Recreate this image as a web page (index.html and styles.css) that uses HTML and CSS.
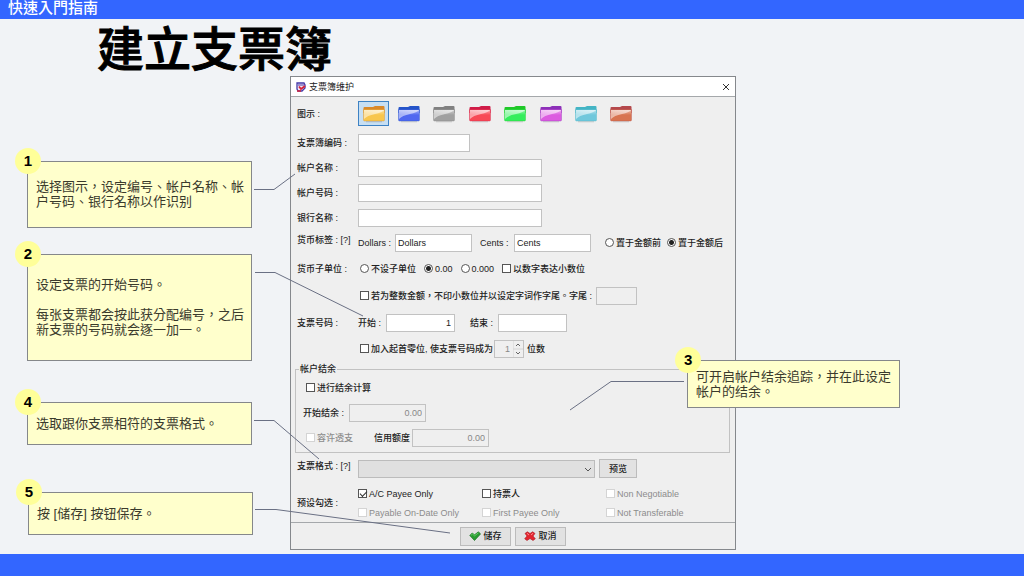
FILE: index.html
```html
<!DOCTYPE html>
<html lang="zh-Hant">
<head>
<meta charset="utf-8">
<title>建立支票簿</title>
<link rel="stylesheet" href="styles.css">
</head>
<body>
<svg class="defs" width="0" height="0" aria-hidden="true">
  <defs>
    <linearGradient id="shine" x1="0" y1="0" x2="1" y2="1">
      <stop offset="0" stop-color="#fff" stop-opacity=".35"/>
      <stop offset="1" stop-color="#fff" stop-opacity=".75"/>
    </linearGradient>
    <linearGradient id="glow" x1="0" y1="0" x2="0" y2="1">
      <stop offset="0" stop-color="#fff" stop-opacity=".5"/>
      <stop offset="1" stop-color="#fff" stop-opacity="0"/>
    </linearGradient>
    <symbol id="folder" viewBox="0 0 22 18">
      <path class="back" d="M.5 3Q.5 2 1.500 2H10L12 1H20.500Q21.500 1 21.500 2V8H.5Z"/>
      <path class="front" d="M.5 4.500H21.500V15Q21.500 16 20.500 16H1.500Q.5 16 .5 15Z"/>
      <path d="M1 5H21V10H1Z" fill="url(#glow)"/>
      <path d="M1 5H21Q19 7.500 12 9Q4 10.500 1 14Z" fill="url(#shine)"/>
      <path d="M3 16.800H19" stroke="#000" stroke-opacity=".15"/>
    </symbol>
  </defs>
</svg>

<header class="topbar">快速入門指南</header>

<main class="slide">
  <h1 class="title">建立支票簿</h1>

  <div class="notes">
    <section class="note note-1"><span class="badge">1</span><p>选择图示，设定编号、帐户名称、帐户号码、银行名称以作识别</p></section>
    <section class="note note-2"><span class="badge">2</span><p>设定支票的开始号码。</p><p>每张支票都会按此获分配编号，之后新支票的号码就会逐一加一。</p></section>
    <section class="note note-4"><span class="badge">4</span><p>选取跟你支票相符的支票格式。</p></section>
    <section class="note note-5"><span class="badge">5</span><p>按 [储存] 按钮保存。</p></section>
  </div>

  <form class="dialog" lang="zh-Hans">
    <div class="dialog-title">
      <svg width="10" height="10" viewBox="0 0 10 10" aria-hidden="true">
        <path d="M1 1H8L9 3V6L6 9H2L1 7Z" fill="#f4e8f4" stroke="#4338a8" stroke-width="1.300"/>
        <path d="M2 3H8" stroke="#4338a8"/>
        <path d="M3 4.500L5 7L9 4" fill="none" stroke="#d52238" stroke-width="1.800"/>
        <path d="M1 9H5" stroke="#d52238" stroke-width="1.500"/>
      </svg>
      <span>支票簿维护</span>
      <button type="button" class="close" aria-label="关闭">
        <svg width="8" height="8" viewBox="0 0 8 8"><path d="M1 1L7 7M7 1L1 7" stroke="#333" fill="none"/></svg>
      </button>
    </div>

    <div class="panel">
      <div class="row row-icons">
        <span class="name">图示 :</span>
        <div class="folders">
          <button type="button" class="folder gold selected" aria-label="金色"><svg width="22" height="18"><use href="#folder"/></svg></button>
          <button type="button" class="folder blue" aria-label="蓝色"><svg width="22" height="18"><use href="#folder"/></svg></button>
          <button type="button" class="folder gray" aria-label="灰色"><svg width="22" height="18"><use href="#folder"/></svg></button>
          <button type="button" class="folder red" aria-label="红色"><svg width="22" height="18"><use href="#folder"/></svg></button>
          <button type="button" class="folder green" aria-label="绿色"><svg width="22" height="18"><use href="#folder"/></svg></button>
          <button type="button" class="folder purple" aria-label="紫色"><svg width="22" height="18"><use href="#folder"/></svg></button>
          <button type="button" class="folder cyan" aria-label="青色"><svg width="22" height="18"><use href="#folder"/></svg></button>
          <button type="button" class="folder brown" aria-label="棕色"><svg width="22" height="18"><use href="#folder"/></svg></button>
        </div>
      </div>
      <div class="row"><label class="name" for="code">支票簿编码 :</label><input class="w-code" id="code" type="text"></div>
      <div class="row"><label class="name" for="accname">帐户名称 :</label><input class="w-long" id="accname" type="text"></div>
      <div class="row"><label class="name" for="accno">帐户号码 :</label><input class="w-long" id="accno" type="text"></div>
      <div class="row"><label class="name" for="bank">银行名称 :</label><input class="w-long" id="bank" type="text"></div>
      <div class="row">
        <span class="name raised">货币标签 : [?]</span>
        <label class="l-dollars" for="dollars">Dollars :</label><input class="w-unit" id="dollars" type="text" value="Dollars">
        <label class="l-cents" for="cents">Cents :</label><input class="w-unit" id="cents" type="text" value="Cents">
        <label class="choice place"><input type="radio" name="place">置于金额前</label>
        <label class="choice place-after"><input type="radio" name="place" checked>置于金额后</label>
      </div>
      <div class="row tall">
        <span class="name">货币子单位 :</span>
        <div class="choices">
          <label class="choice"><input type="radio" name="sub">不设子单位</label>
          <label class="choice"><input type="radio" name="sub" checked>0.00</label>
          <label class="choice"><input type="radio" name="sub">0.000</label>
          <label class="choice"><input type="checkbox">以数字表达小数位</label>
        </div>
      </div>
      <div class="row tall indent">
        <label class="choice" lang="zh-Hant"><input type="checkbox">若为整数金额，不印小数位并以设定字词作字尾。</label>
        <label class="l-suffix" for="suffix">字尾 :</label><input class="w-suffix" id="suffix" type="text" disabled>
      </div>
      <div class="row tall">
        <span class="name">支票号码 :</span>
        <label class="l-start" for="start">开始 :</label><input class="w-num num" id="start" type="text" value="1">
        <label class="l-end" for="end">结束 :</label><input class="w-num num" id="end" type="text">
      </div>
      <div class="row indent">
        <label class="choice"><input type="checkbox">加入起首零位, 使支票号码成为</label>
        <div class="spinner">
          <input class="num" type="text" value="1" aria-label="位数" disabled>
          <svg width="10" height="16" viewBox="0 0 10 16" aria-hidden="true"><path d="M0 0V16M0 8H10" stroke="#d4d4d4"/><path d="M3 5L5 3L7 5M3 11L5 13L7 11" fill="none" stroke="#666"/></svg>
        </div>
        <span>位数</span>
      </div>

      <fieldset class="balance">
        <legend>帐户结余</legend>
        <div class="row"><label class="choice"><input type="checkbox">进行结余计算</label></div>
        <div class="row"><label class="l-open" for="open">开始结余 :</label><input class="w-unit num" id="open" type="text" value="0.00" disabled></div>
        <div class="row"><label class="choice off l-over"><input type="checkbox" disabled>容许透支</label><label class="l-credit" for="credit">信用额度</label><input class="w-unit num" id="credit" type="text" value="0.00" disabled></div>
      </fieldset>

      <div class="row format">
        <label class="name raised" for="format">支票格式 : [?]</label>
        <div class="select"><select id="format" disabled><option></option></select>
          <svg width="6" height="4" viewBox="0 0 6 4" aria-hidden="true"><path d="M0 0L3 3L6 0" fill="none" stroke="#555"/></svg></div>
        <button type="button" class="btn preview">预览</button>
      </div>
      <div class="row presets">
        <span class="name">预设勾选 :</span>
        <div class="preset-grid">
          <label class="choice"><input type="checkbox" checked>A/C Payee Only</label>
          <label class="choice"><input type="checkbox">持票人</label>
          <label class="choice off"><input type="checkbox" disabled>Non Negotiable</label>
          <label class="choice off"><input type="checkbox" disabled>Payable On-Date Only</label>
          <label class="choice off"><input type="checkbox" disabled>First Payee Only</label>
          <label class="choice off"><input type="checkbox" disabled>Not Transferable</label>
        </div>
      </div>
    </div>

    <div class="actions">
      <button type="button" class="btn"><svg width="12" height="10" viewBox="0 0 12 10" aria-hidden="true"><path d="M.8 4.500L3.200 2L5.500 3.800L9.500 .8L11.500 3L5.500 9.500Z" fill="#289c30" stroke="#176f20" stroke-width=".7"/><path d="M2 4.300L3.500 3L5.500 4.800L9.500 1.800" fill="none" stroke="#6cd56c" stroke-width=".9"/></svg>储存</button>
      <button type="button" class="btn"><svg width="12" height="10" viewBox="0 0 12 10" aria-hidden="true"><path d="M1 2.500L3.300 .8L6 2.500L8.700 .8L11 2.500L9 5L11.300 7.800L9 9.500L6 7.500L3 9.500L.7 7.800L3 5Z" fill="#e32630" stroke="#a91822" stroke-width=".6"/><path d="M3 2.300L5 4M9 2.300L7 4" stroke="#ff8c8c"/></svg>取消</button>
    </div>
  </form>

  <section class="note note-3"><span class="badge">3</span><p>可开启帐户结余追踪，并在此设定帐户的结余。</p></section>

  <svg class="connectors" viewBox="0 0 1024 535" preserveAspectRatio="none" aria-hidden="true">
    <path d="M254 170.500H274L295 155"/>
    <path d="M255 253.500H275L363 297"/>
    <path d="M254 401.500H274L319 440"/>
    <path d="M255 490.500H276L450 514"/>
    <path d="M684 362.500H611L570 391"/>
  </svg>
</main>

<footer class="bottombar"></footer>
</body>
</html>
```
FILE: styles.css
```css
* { box-sizing: border-box; }

body {
  margin: 0;
  min-height: 100vh;
  display: flex;
  flex-direction: column;
  background: #f1f3f6;
  color: #222;
  font-family: "Liberation Sans", "Noto Sans CJK TC", sans-serif;
}

.defs { position: absolute; }

.topbar {
  height: 19px;
  padding-left: 8px;
  background: #3366ff;
  color: #fff;
  font-size: 15px;
  font-weight: 500;
  line-height: 15px;
}

.bottombar { height: 22px; background: #3366ff; }

.slide {
  position: relative;
  flex: 1;
  display: grid;
  grid-template-columns: 290fr 446fr 288fr;
  grid-template-rows: 57px auto;
  align-items: start;
}

.title {
  grid-column: 1 / -1;
  margin: 0;
  padding-left: 97px;
  color: #000;
  font-family: "Noto Sans CJK TC", sans-serif;
  font-size: 47px;
  font-weight: 500;
  line-height: 54px;
  -webkit-text-stroke: 1px #000;
}

/* Callouts */
.notes {
  display: flex;
  flex-direction: column;
  padding: 85px 38px 0 27px;
}

.note {
  position: relative;
  border: 1px solid #85878a;
  background: #ffffcc;
  padding: 13px 4px 13px 8px;
  color: #3a3a2c;
  font-size: 13px;
  font-weight: 400;
  line-height: 15px;
}

.note p { margin: 0; }
.note p + p { margin-top: 15px; }
.note-1 { padding-top: 17px; padding-bottom: 18px; }
.note-2 { padding-top: 22px; padding-bottom: 23px; margin-top: 26px; }
.note-4 { margin-top: 41px; }
.note-5 { margin: 47px -1px 0 1px; }

.note-3 {
  position: absolute;
  top: 341px;
  left: 67.1%;
  width: 20.8%;
  padding: 8px 4px 8px 8px;
  z-index: 1;
}

.badge {
  position: absolute;
  top: -14px;
  left: -13px;
  width: 26px;
  height: 26px;
  border-radius: 50%;
  background: #ffff99;
  color: #000;
  font-size: 15px;
  font-weight: 700;
  line-height: 26px;
  text-align: center;
}

.connectors {
  position: absolute;
  inset: 0;
  width: 100%;
  height: 100%;
  pointer-events: none;
}

.connectors path {
  fill: none;
  stroke: #6a7084;
  stroke-width: 1;
  vector-effect: non-scaling-stroke;
}

/* Dialog */
.dialog {
  border: 1px solid #85888c;
  background: #efefef;
  font-family: "Liberation Sans", "Noto Sans CJK SC", sans-serif;
  font-size: 9px;
  font-weight: 500;
  line-height: 12px;
  white-space: nowrap;
}

.dialog-title {
  display: flex;
  align-items: center;
  gap: 3px;
  height: 20px;
  padding: 0 5px;
  border-bottom: 1px solid #a5a8ab;
  background: #fff;
  font-weight: 400;
}

button, input, select { font: inherit; color: inherit; }

.close {
  display: flex;
  margin-left: auto;
  padding: 0;
  border: 0;
  background: none;
}

.panel { border-bottom: 1px solid #a5a8ab; }

.row {
  display: flex;
  align-items: center;
  height: 25px;
  padding-left: 6px;
}

.row-icons { height: 33px; }
.tall { height: 27px; }
.indent { padding-left: 69px; }
.name { flex: none; width: 61px; }
.raised { padding-bottom: 5px; }

.folders { display: flex; justify-content: space-between; width: 279px; }

.folder {
  display: flex;
  align-items: center;
  justify-content: center;
  width: 31px;
  height: 25px;
  padding: 0;
  border: 1px solid transparent;
  background: none;
}

.selected { border-color: #3d82c4; background: #c7dff3; }
.back { fill: var(--dark); }
.front { fill: var(--light); stroke: var(--dark); stroke-width: .6; stroke-opacity: .6; }
.gold { --dark: #d9892b; --light: #f8c64c; }
.blue { --dark: #2454c8; --light: #5068f0; }
.gray { --dark: #808080; --light: #a0a0a0; }
.red { --dark: #cf1c48; --light: #f84a56; }
.green { --dark: #20c828; --light: #34ee5c; }
.purple { --dark: #8c30b8; --light: #dc5ce0; }
.cyan { --dark: #44b4c4; --light: #70c8dc; }
.brown { --dark: #b4484c; --light: #d87450; }

input[type="text"] {
  height: 18px;
  min-width: 0;
  padding: 0 2px;
  border: 1px solid #c2c2c2;
  border-radius: 0;
  background: #fff;
}

input[type="text"]:disabled { background: #efefef; color: #888; }
input.num { padding-right: 3px; text-align: right; }

.w-code { width: 112px; }
.w-long { width: 184px; }
.w-unit { width: 77px; }
.w-num { width: 69px; }
.w-suffix { width: 41px; }
.l-dollars { width: 37px; }
.l-cents { width: 42px; padding-left: 8px; }
.l-start { width: 28px; }
.l-end { width: 43px; padding-left: 15px; }
.l-suffix { width: 27px; }
.l-open { width: 46px; }
.l-over { width: 68px; margin-left: 3px; }
.l-credit { width: 38px; }
.place { margin-left: 14px; }
.place-after { margin-left: 6px; }

.choice { display: flex; align-items: center; gap: 2px; }
.choices { display: flex; gap: 8px; padding-left: 2px; }
.off { color: #8c8c8c; }

input[type="checkbox"], input[type="radio"] {
  appearance: none;
  flex: none;
  width: 9px;
  height: 9px;
  margin: 0;
  border: 1px solid #555;
  background: #fff;
}

input[type="radio"] { border-radius: 50%; }
input[type="radio"]:checked { background: radial-gradient(#222 2px, #fff 3px); }
input[type="checkbox"]:disabled { border-color: #d4d4d4; }

input[type="checkbox"]:checked::after {
  content: "";
  display: block;
  width: 6px;
  height: 3px;
  margin: 1px 0 0 1px;
  border: solid #333;
  border-width: 0 0 1px 1px;
  transform: rotate(-45deg);
}

.spinner {
  display: flex;
  width: 30px;
  height: 18px;
  margin: 0 3px 0 1px;
  border: 1px solid #c2c2c2;
}

.spinner input[type="text"] { width: 18px; height: 16px; border: 0; }

.balance {
  min-width: 0;
  margin: 2px 5px 0 4px;
  padding: 0 0 2px;
  border: 1px solid #c2c2c2;
}

.balance legend { margin-left: 3px; padding: 0 1px; }
.balance .row { padding-left: 7px; }
.balance .row:nth-of-type(1) { padding-left: 10px; }

.format { height: 31px; }

.select { position: relative; width: 237px; height: 18px; }

.select select {
  appearance: none;
  width: 100%;
  height: 100%;
  border: 1px solid #bcbcbc;
  border-radius: 0;
  background: #e0e0e0;
  opacity: 1;
}

.select svg { position: absolute; right: 4px; top: 8px; }

.btn {
  display: flex;
  align-items: center;
  justify-content: center;
  gap: 2px;
  width: 51px;
  height: 19px;
  padding: 0;
  border: 1px solid #bcbcbc;
  background: #e2e2e2;
}

.preview { width: 38px; margin-left: 4px; }

.presets { height: 38px; }

.preset-grid {
  display: grid;
  grid-template-columns: 124px 124px auto;
  grid-auto-rows: 19px;
}

.actions {
  display: flex;
  align-items: center;
  justify-content: center;
  gap: 4px;
  height: 26px;
}
```
